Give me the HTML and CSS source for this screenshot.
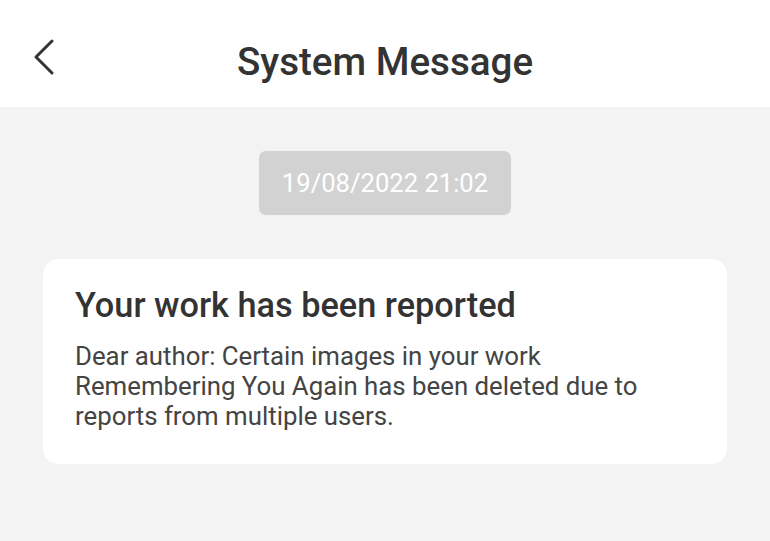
FILE: index.html
```html
<!DOCTYPE html>
<html lang="en">
<head>
  <meta charset="UTF-8">
  <title>System Message</title>
  <meta name="viewport" content="width=device-width, initial-scale=1">
  <link rel="stylesheet" href="styles.css">
</head>
<body>
  <header class="topbar">
    <button class="back" aria-label="Back">
      <svg width="24" height="38" viewBox="0 0 24 38">
        <path d="M20 3 L4 19 L20 35" fill="none" stroke="#333" stroke-width="3" stroke-linecap="round" stroke-linejoin="round"/>
      </svg>
    </button>
    <h1>System Message</h1>
  </header>

  <main class="feed">
    <div class="time">19/08/2022 21:02</div>

    <div class="msg-card">
      <h2>Your work has been reported</h2>
      <p>Dear author: Certain images in your work <span class="work">Remembering You Again</span> has been deleted due to reports from multiple users.</p>
    </div>
  </main>
</body>
</html>
```

FILE: styles.css
```css
body {
  margin: 0;
  font-family: Roboto, 'Noto Sans', sans-serif;
  background: #f3f3f3;
  color: #333;
}

.topbar {
  height: 107px;
  box-sizing: border-box;
  padding-top: 39px;
  background: #fff;
  display: flex;
  align-items: flex-start;
  justify-content: center;
  position: relative;
}

.topbar h1 {
  margin: 0;
  font-size: 38.6px;
  line-height: 1.172;
  font-weight: 500;
  color: #333;
}

.back {
  position: absolute;
  left: 32px;
  top: 38px;
  background: none;
  border: none;
  padding: 0;
  cursor: pointer;
}

.feed {
  padding: 44px 43px;
  display: flex;
  flex-direction: column;
  align-items: center;
}

.time {
  background: #d2d2d2;
  color: #fff;
  font-size: 25.6px;
  height: 64px;
  padding: 0 23px;
  border-radius: 7px;
  display: flex;
  align-items: center;
  margin-bottom: 44px;
}

.msg-card {
  align-self: stretch;
  background: #fff;
  border-radius: 15px;
  padding: 26px 32px 33px;
}

.msg-card h2 {
  margin: 0 0 16px;
  font-size: 34.3px;
  line-height: 1.172;
  font-weight: 500;
  color: #333;
}

.msg-card p {
  margin: 0;
  font-size: 25.8px;
  line-height: 30px;
  color: #444;
}

.work {
  white-space: nowrap;
}
```
